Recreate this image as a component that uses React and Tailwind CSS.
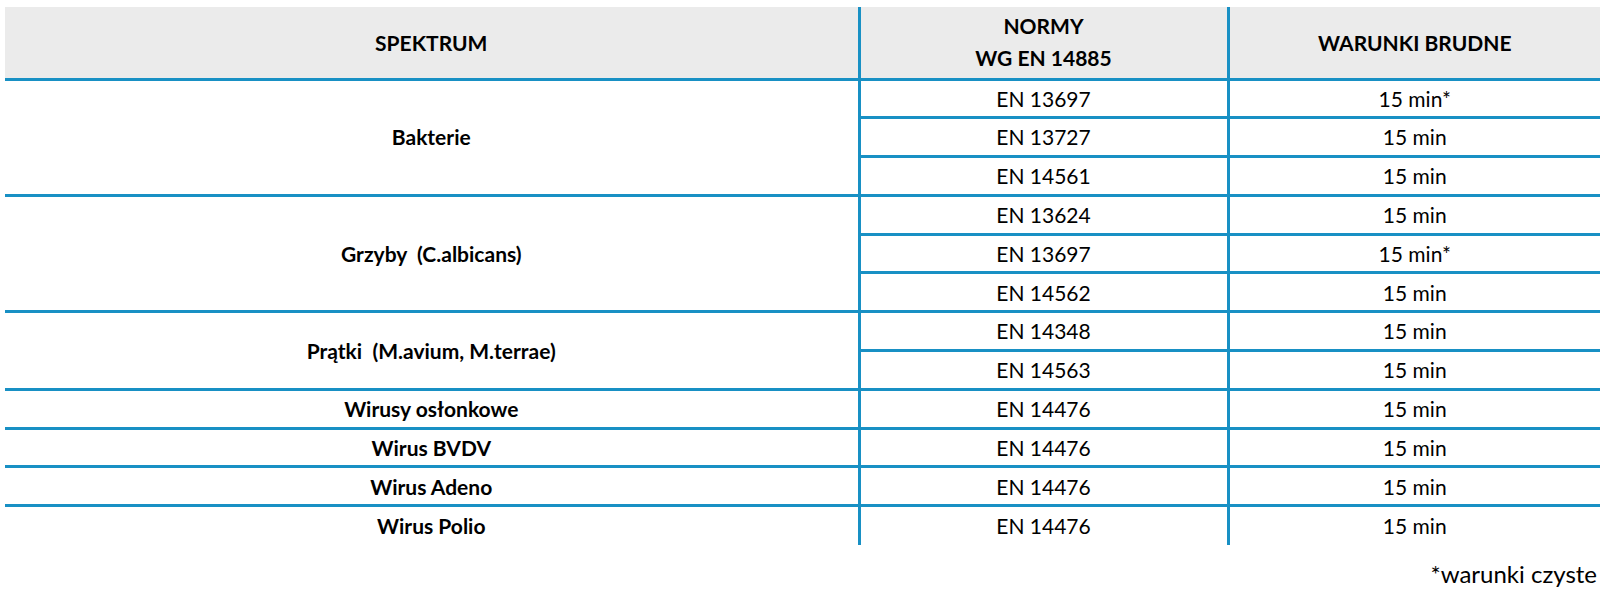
import React from 'react';

const groups = [
    { name: 'Bakterie', rows: [['EN 13697', '15 min*'], ['EN 13727', '15 min'], ['EN 14561', '15 min']] },
    { name: 'Grzyby  (C.albicans)', rows: [['EN 13624', '15 min'], ['EN 13697', '15 min*'], ['EN 14562', '15 min']] },
    { name: 'Prątki  (M.avium, M.terrae)', rows: [['EN 14348', '15 min'], ['EN 14563', '15 min']] },
    { name: 'Wirusy osłonkowe', rows: [['EN 14476', '15 min']] },
    { name: 'Wirus BVDV', rows: [['EN 14476', '15 min']] },
    { name: 'Wirus Adeno', rows: [['EN 14476', '15 min']] },
    { name: 'Wirus Polio', rows: [['EN 14476', '15 min']] },
];

export default function App() {
    return (
        <div className="w-[1608px] h-[598px] bg-white pt-[7px] pl-[5px] pr-[8px] font-['Lato',sans-serif] text-[21px] text-black">
            <table className="w-[1595px] table-fixed border-collapse">
                <colgroup>
                    <col className="w-[854px]" />
                    <col className="w-[369px]" />
                    <col className="w-[372px]" />
                </colgroup>
                <thead>
                    <tr className="h-[72px] bg-[#ebebeb] font-bold">
                        <th className="border-b-[3px] border-r-[3px] border-[#1890c4] text-center">SPEKTRUM</th>
                        <th className="border-b-[3px] border-r-[3px] border-[#1890c4] text-center leading-[32px]">
                            NORMY
                            <br />
                            WG EN 14885
                        </th>
                        <th className="border-b-[3px] border-[#1890c4] text-center">WARUNKI BRUDNE</th>
                    </tr>
                </thead>
                <tbody>
                    {groups.map((g, gi) =>
                        g.rows.map((r, ri) => {
                            const last = gi === groups.length - 1 && ri === g.rows.length - 1;
                            return (
                                <tr key={g.name + ri} className="h-[38.8px]">
                                    {ri === 0 && (
                                        <td
                                            rowSpan={g.rows.length}
                                            className={`border-r-[3px] border-[#1890c4] text-center font-bold ${gi === groups.length - 1 ? '' : 'border-b-[3px]'}`}
                                        >
                                            <span className="whitespace-pre">{g.name}</span>
                                        </td>
                                    )}
                                    <td className={`border-r-[3px] border-[#1890c4] text-center ${last ? '' : 'border-b-[3px]'}`}>{r[0]}</td>
                                    <td className={`border-[#1890c4] text-center ${last ? '' : 'border-b-[3px]'}`}>{r[1]}</td>
                                </tr>
                            );
                        })
                    )}
                </tbody>
            </table>
            <p className="mt-[15px] text-right pr-[3px] text-[24px] leading-[28px]">*warunki czyste</p>
        </div>
    );
}
